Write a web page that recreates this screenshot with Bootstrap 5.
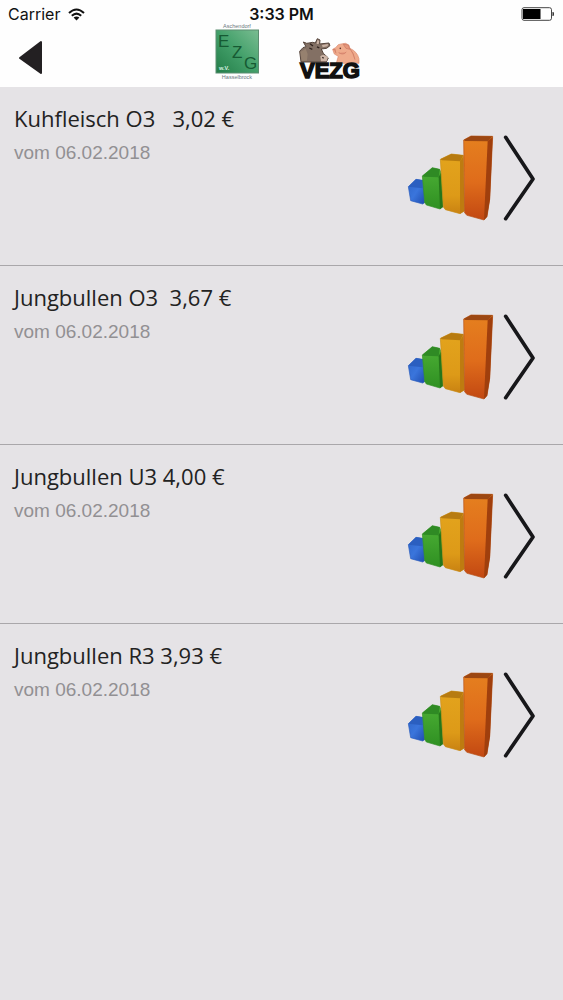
<!DOCTYPE html>
<html lang="de">
<head>
<meta charset="utf-8">
<meta name="viewport" content="width=device-width, initial-scale=1">
<title>VEZG Preise</title>
<link href="https://cdn.jsdelivr.net/npm/bootstrap@5.3.0/dist/css/bootstrap.min.css" rel="stylesheet">
<style>
body { background: #e5e3e6; font-family: "Liberation Sans", sans-serif; color: #222; }
.app-head { background: #fefefe; height: 87px; }
.status-bar { height: 28px; font-family: Inter, sans-serif; font-size: 16px; line-height: 28px; color: #111; padding: 0 8px; }
.status-side { flex: 1 1 0; }
.logo-bar { height: 59px; }
.back-btn { position: absolute; left: 18px; top: 12px; line-height: 0; }
.logos { position: absolute; left: 50%; top: -6px; margin-left: -70px; gap: 32px; }
.price-item { min-height: 179px; padding: 14px 28px 0 14px; border-bottom: 1px solid #a9a7aa; color: #222; }
.price-list li:last-child .price-item { border-bottom: 0; }
.price-title { font-family: "Open Sans", sans-serif; font-size: 22px; line-height: 34px; white-space: pre; margin: 0; font-weight: 400; }
.price-date { font-size: 19px; line-height: 36px; color: #929093; }
.item-icons { gap: 9px; padding-top: 33px; }
</style>
</head>
<body>
<svg width="0" height="0" class="position-absolute" aria-hidden="true">
  <defs>
    <linearGradient id="blue" x1="0" y1="0" x2="1" y2="1"><stop offset="0" stop-color="#2f66c8"/><stop offset=".5" stop-color="#3a75dc"/><stop offset="1" stop-color="#1f4cae"/></linearGradient>
    <linearGradient id="green" x1="0" y1="0" x2="0" y2="1"><stop offset="0" stop-color="#4caf35"/><stop offset="1" stop-color="#2f9022"/></linearGradient>
    <linearGradient id="gold" x1="0" y1="0" x2="0" y2="1"><stop offset="0" stop-color="#e3a41d"/><stop offset=".7" stop-color="#dd9a18"/><stop offset="1" stop-color="#c98212"/></linearGradient>
    <linearGradient id="orange" x1="0" y1="0" x2="0" y2="1"><stop offset="0" stop-color="#e5801f"/><stop offset=".55" stop-color="#df6c1b"/><stop offset="1" stop-color="#c24812"/></linearGradient>
    <linearGradient id="board" x1="1" y1="0" x2="0" y2="1"><stop offset="0" stop-color="#7abd92"/><stop offset=".5" stop-color="#43a06a"/><stop offset="1" stop-color="#237d48"/></linearGradient>
  </defs>
  <symbol id="chart" viewBox="9 9 261 261">
    <g stroke-linejoin="round" stroke-width="2">
      <path d="M13 167 36 145 56 148 62 160V215L56 219 20 209Z" fill="url(#blue)" stroke="#2a5cbd"/>
      <path d="M13 167 36 145 56 148V172Z" fill="#2b5fc0"/>
      <path d="M55 135 85 110 107 115 114 134 117 227 108 234 67 222 62 214Z" fill="url(#green)" stroke="#348f27"/>
      <path d="M55 135 85 110 107 115 104 139 60 137Z" fill="#2f8a24"/>
      <path d="M104 139 110 126 117 227 108 234Z" fill="#25761b"/>
      <path d="M109 85 142 69 178 73 181 240 168 248 124 236 118 228Z" fill="url(#gold)" stroke="#c98c17"/>
      <path d="M109 85 142 69 178 73 169 91 114 88Z" fill="#b77b10"/>
      <path d="M168 91 178 76 181 240 168 248Z" fill="#be7b10"/>
      <path d="M179 27 201 15 266 16 257 205 249 257 240 267 189 253 182 246Z" fill="url(#orange)" stroke="#b65015"/>
      <path d="M179 27 201 15 266 16 252 31 184 30Z" fill="#9c4712"/>
      <path d="M251 31 266 18 258 205 249 257 240 267Z" fill="#a03f0d"/>
    </g>
  </symbol>
  <symbol id="next" viewBox="324 27 96 261">
    <path d="M332 37 414 162 332 281" fill="none" stroke="#17171a" stroke-width="11" stroke-linecap="round" stroke-linejoin="round"/>
  </symbol>
</svg>

<header class="app-head">
  <div class="status-bar d-flex align-items-center">
    <div class="status-side d-flex align-items-center gap-2">
      <span>Carrier</span>
      <svg width="17" height="13" viewBox="0 0 17 13" fill="none" stroke="#111" stroke-width="2" role="img" aria-label="WLAN"><path d="M1 5Q8.500-2 16 5M3.800 7.800Q8.500 3.400 13.200 7.800"/><path d="M5.600 9.600Q8.500 7.200 11.400 9.600L8.500 12.500Z" fill="#111" stroke="none"/></svg>
    </div>
    <span class="fw-semibold px-1">3:33 PM</span>
    <div class="status-side d-flex justify-content-end">
      <svg width="34" height="14" viewBox="0 0 34 14" role="img" aria-label="Akku"><rect x="1" y=".7" width="29.500" height="12.600" rx="2" fill="#fff" stroke="#444"/><rect x="2" y="2" width="17.500" height="10" fill="#000"/><path d="M31.500 5h1q1 2 0 4h-1z" fill="#222"/></svg>
    </div>
  </div>
  <div class="logo-bar position-relative">
    <button type="button" class="back-btn btn p-0 border-0" aria-label="Zurück">
      <svg width="26" height="36" viewBox="0 0 26 36"><path d="M23 2V33L2 18Z" fill="#232022" stroke="#232022" stroke-width="2" stroke-linejoin="round"/></svg>
    </button>
    <div class="logos d-flex">
      <svg width="50" height="60" viewBox="0 0 50 60" font-family="Liberation Sans, sans-serif" role="img" aria-label="EZG Aschendorf Hasselbrock">
        <text x="25" y="5.500" font-size="5.500" text-anchor="middle" fill="#6a7780">Aschendorf</text>
        <rect x="4" y="8" width="42.500" height="43" fill="url(#board)" stroke="#5b8d70"/>
        <g fill="#165a33" font-size="17"><text x="6" y="25">E</text><text x="20" y="35.500">Z</text><text x="32" y="46.500">G</text></g>
        <text x="7" y="48" font-size="5.500" font-weight="700" fill="#d8f0e0">w.V.</text>
        <text x="25" y="57" font-size="5.500" text-anchor="middle" fill="#6a7780">Hasselbrock</text>
      </svg>
      <svg width="70" height="60" viewBox="293 22 70 60" role="img" aria-label="VEZG">
        <g transform="translate(294 34) scale(.333)" stroke-linejoin="round">
          <path d="M113 46 122 41 130 32 143 29 152 28 161 33 165 43Q187 53 192 74V88H124L130 67 118 60Z" fill="#efab8c" stroke="#d9886e" stroke-width="2"/>
          <path d="M145 31 161 33 164 46 153 43ZM131 56Q145 65 154 54M165 44Q177 58 180 77M114 47 120 45 123 58" fill="#e5977b" stroke="#c87461" stroke-width="2"/>
          <circle cx="136" cy="43" r="2.500" fill="#542d27"/>
          <path d="M14 52 24 41 33 38 25 24 35 28 42 27 53 25 61 27 67 14 75 18 74 30 102 27 105 35 95 43 79 45 85 58 100 72 94 84H18Z" fill="#837064" stroke="#55443b" stroke-width="3"/>
          <path d="M16 54 32 44 38 60 36 80 20 81Z" fill="#96816f"/>
          <path d="M67 18 73 20 71 30 65 30ZM81 33 99 30 98 37 83 40Z" fill="#cab2a4"/>
          <path d="M76 67Q86 58 99 70L95 82H78Z" fill="#cdb5a7"/>
          <path d="M43 42 52 46M66 39 73 42M45 29 54 36M82 70 86 73" fill="none" stroke="#30231e" stroke-width="4"/>
        </g>
        <text x="299" y="78" font-family="Liberation Sans, sans-serif" font-size="22" font-weight="700" fill="#111" stroke="#111" stroke-width="1.600">VEZG</text>
      </svg>
    </div>
  </div>
</header>

<main>
  <ul class="price-list list-unstyled m-0">
    <li><a href="#" class="price-item d-flex justify-content-between text-decoration-none">
      <div><h2 class="price-title">Kuhfleisch O3   3,02 €</h2><div class="price-date">vom 06.02.2018</div></div>
      <div class="item-icons d-flex"><svg width="87" height="87"><use href="#chart"/></svg><svg width="32" height="87"><use href="#next"/></svg></div>
    </a></li>
    <li><a href="#" class="price-item d-flex justify-content-between text-decoration-none">
      <div><h2 class="price-title">Jungbullen O3  3,67 €</h2><div class="price-date">vom 06.02.2018</div></div>
      <div class="item-icons d-flex"><svg width="87" height="87"><use href="#chart"/></svg><svg width="32" height="87"><use href="#next"/></svg></div>
    </a></li>
    <li><a href="#" class="price-item d-flex justify-content-between text-decoration-none">
      <div><h2 class="price-title">Jungbullen U3 4,00 €</h2><div class="price-date">vom 06.02.2018</div></div>
      <div class="item-icons d-flex"><svg width="87" height="87"><use href="#chart"/></svg><svg width="32" height="87"><use href="#next"/></svg></div>
    </a></li>
    <li><a href="#" class="price-item d-flex justify-content-between text-decoration-none">
      <div><h2 class="price-title">Jungbullen R3 3,93 €</h2><div class="price-date">vom 06.02.2018</div></div>
      <div class="item-icons d-flex"><svg width="87" height="87"><use href="#chart"/></svg><svg width="32" height="87"><use href="#next"/></svg></div>
    </a></li>
  </ul>
</main>
<script src="https://cdn.jsdelivr.net/npm/bootstrap@5.3.0/dist/js/bootstrap.bundle.min.js"></script>
</body>
</html>
